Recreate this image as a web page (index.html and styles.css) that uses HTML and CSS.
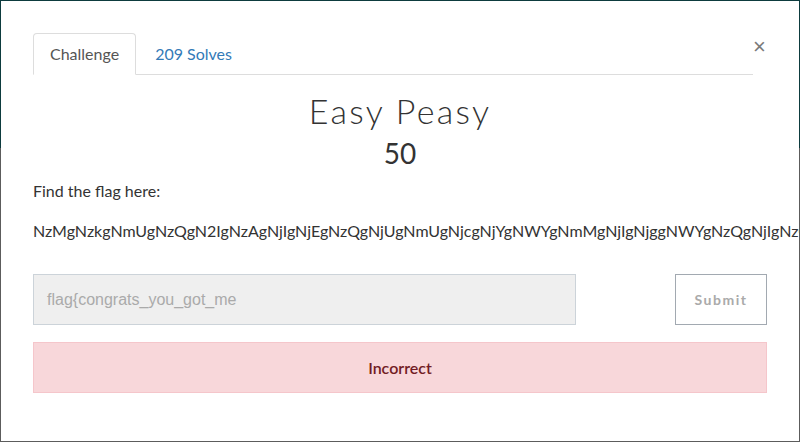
FILE: index.html
```html
<!DOCTYPE html>
<html>
<head>
<meta charset="utf-8">
<link rel="stylesheet" href="styles.css">
</head>
<body>
<div class="modal">
  <div class="head">
    <ul class="tabs">
      <li class="tab active">Challenge</li>
      <li class="tab link">209 Solves</li>
    </ul>
    <span class="close">×</span>
  </div>
  <h2 class="title">Easy Peasy</h2>
  <h3 class="points">50</h3>
  <p class="desc">Find the flag here:</p>
  <p class="code">NzMgNzkgNmUgNzQgN2IgNzAgNjIgNjEgNzQgNjUgNmUgNjcgNjYgNWYgNmMgNjIgNjggNWYgNzQgNjIgNzQgNWYgNmQgNjUgN2Q=</p>
  <div class="form">
    <div class="input">flag{congrats_you_got_me</div>
    <button class="submit">Submit</button>
  </div>
  <div class="alert">Incorrect</div>
</div>
</body>
</html>
```
FILE: styles.css
```css
html, body {
  margin: 0;
  padding: 0;
  height: 100%;
}
body {
  background: linear-gradient(#0d3b3e 0, #0d3b3e 148px, #5c5c5c 148px, #5c5c5c 100%);
  padding: 1px 1px 1px 1px;
  box-sizing: border-box;
  overflow: hidden;
  font-family: Lato, "Noto Sans", sans-serif;
  color: #333;
}
.modal {
  background: #fff;
  height: 440px;
  padding: 32px 32px 0 32px;
  box-sizing: border-box;
  overflow: hidden;
}
.head {
  display: flex;
  align-items: flex-start;
}
.tabs {
  flex: 0 0 720px;
  list-style: none;
  margin: 0;
  padding: 0;
  display: flex;
  border-bottom: 1px solid #ddd;
}
.tab {
  font-size: 16px;
  line-height: 20px;
  padding: 10px 16px 10px 16px;
  margin-bottom: -1px;
  margin-right: 2px;
  border: 1px solid transparent;
  border-radius: 4px 4px 0 0;
}
.tab.active {
  color: #555;
  border-color: #ddd #ddd transparent #ddd;
  background: #fff;
}
.tab.link {
  color: #337ab7;
}
.close {
  margin-left: auto;
  margin-top: 3px;
  margin-right: 2px;
  font-size: 22px;
  line-height: 21px;
  font-weight: 400;
  color: #7a7a7a;
  font-family: "Liberation Sans", sans-serif;
}
.title {
  margin: 16px 0 0 0;
  text-align: center;
  font-weight: 300;
  font-size: 34px;
  line-height: 40px;
  letter-spacing: 2.3px;
  color: #333;
}
.points {
  margin: 5px 0 0 0;
  text-align: center;
  font-weight: 400;
  font-size: 28px;
  line-height: 34px;
  color: #333;
}
.desc {
  margin: 10px 0 0 0;
  font-size: 16px;
  line-height: 22px;
}
.code {
  margin: 18px 0 0 0;
  font-size: 16px;
  line-height: 22px;
  white-space: nowrap;
}
.form {
  display: flex;
  justify-content: space-between;
  margin-top: 32px;
}
.input {
  width: 528px;
  height: 49px;
  border: 1px solid #ccd3d9;
  background: #efefef;
  color: #aaa;
  font-family: "Liberation Sans", Arial, sans-serif;
  font-size: 16px;
  line-height: 49px;
  padding-left: 13px;
  box-sizing: content-box;
}
.submit {
  width: 92px;
  height: 51px;
  border: 1px solid #a2a9b1;
  background: #fff;
  color: #aaa;
  font-family: Lato, sans-serif;
  font-weight: 700;
  font-size: 14px;
  letter-spacing: 1.5px;
  padding: 0;
}
.alert {
  margin-top: 17px;
  height: 49px;
  border: 1px solid #f5c6cb;
  background: #f8d7da;
  color: #721c24;
  text-align: center;
  font-size: 16px;
  font-weight: 600;
  line-height: 49px;
}
```
